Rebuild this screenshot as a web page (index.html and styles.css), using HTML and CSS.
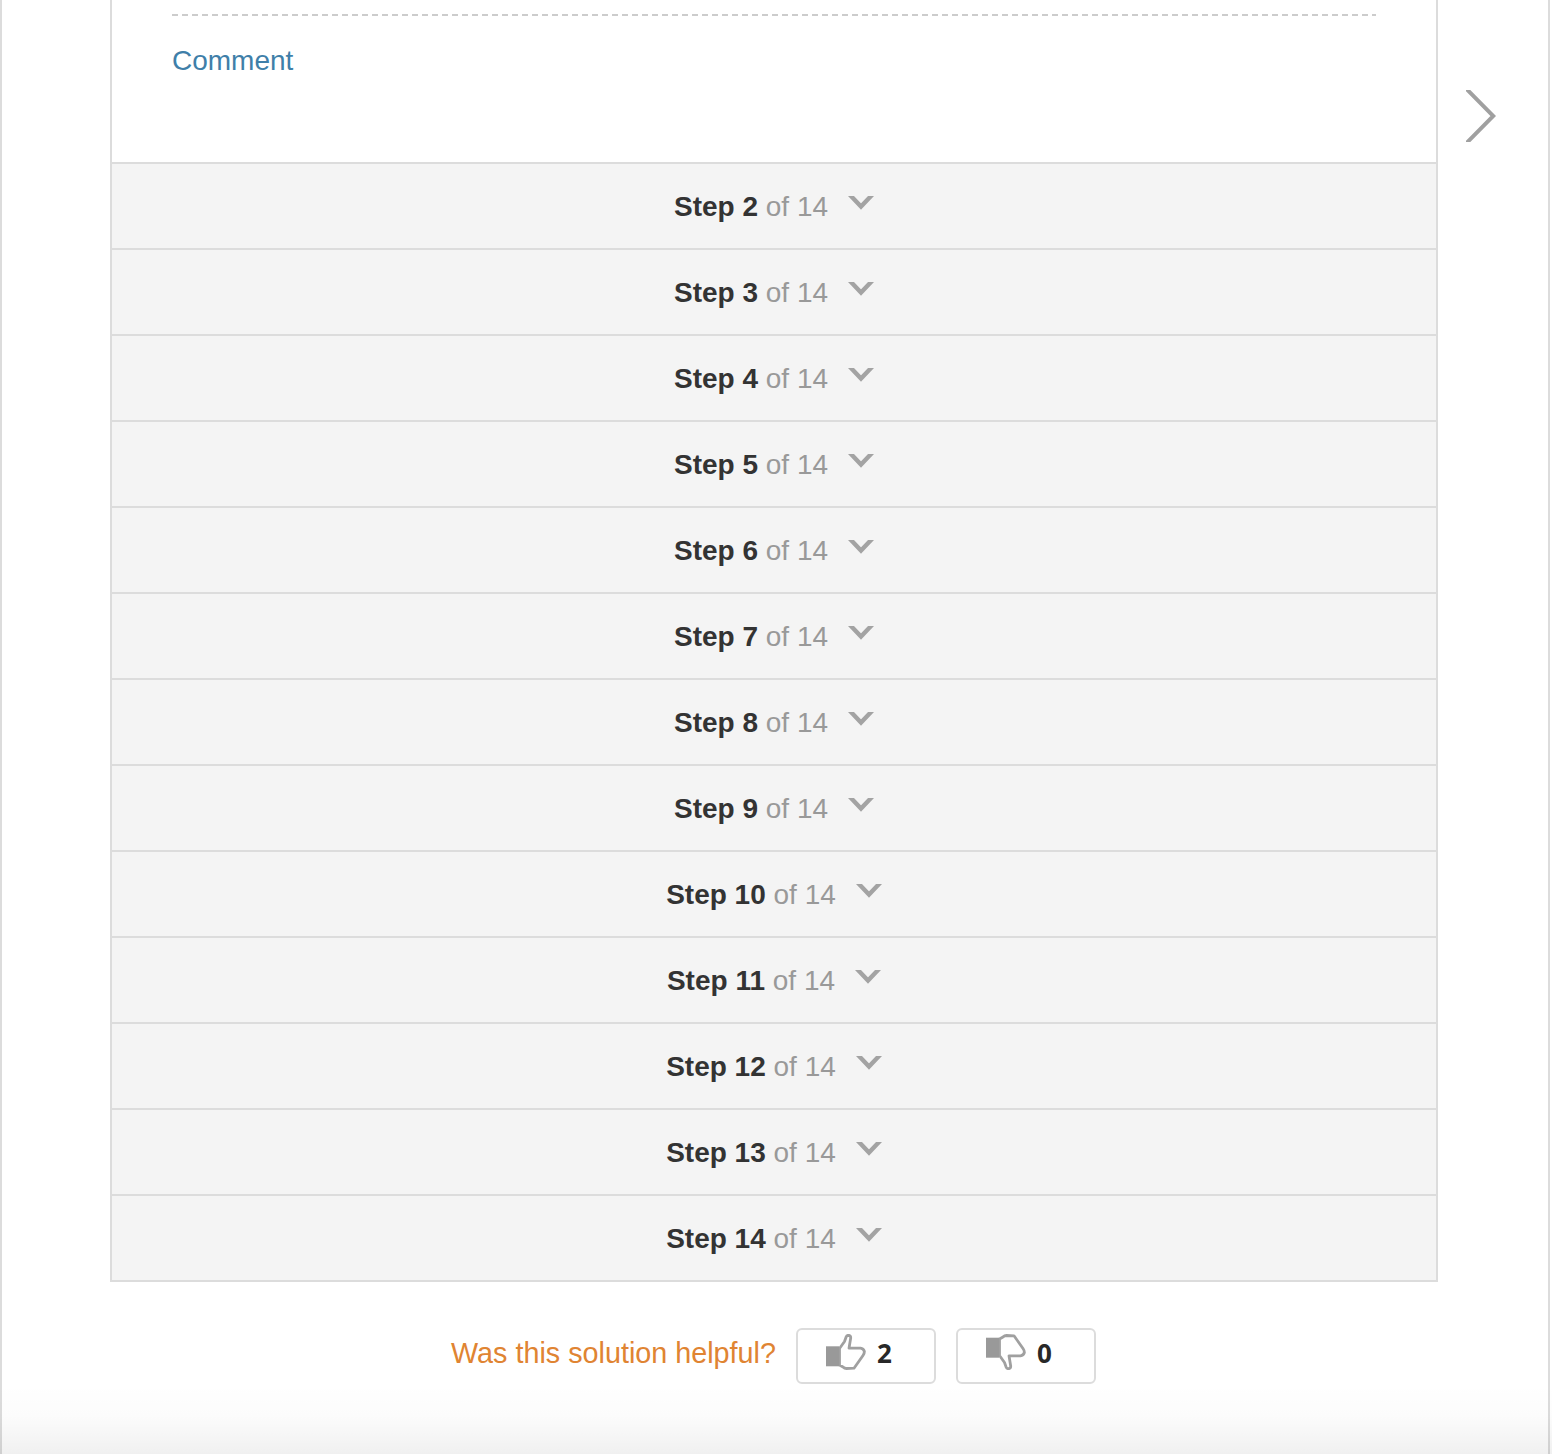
FILE: index.html
```
<!DOCTYPE html>
<html lang="en">
<head>
<meta charset="utf-8">
<title>Solution steps</title>
<link rel="stylesheet" href="styles.css">
</head>
<body>
<svg class="symbols" aria-hidden="true">
  <symbol id="chevron" viewBox="0 0 26 14"><path d="M1.5 -1.5L13 10.5L24.5 -1.5" fill="none" stroke="#a3a3a3" stroke-width="4.4"/></symbol>
  <symbol id="thumb" viewBox="0 0 40 36">
    <path d="M13.5 14.5L18.5 7.5L20.2 2.8Q20.8 1.3 22.5 1.3Q24.8 1.5 24.7 4L23 14.2H34.5Q37.5 14.6 38.4 17.5Q38.4 19.5 37 21.5L28 34.2L20.5 34.5Q18.5 34.5 17 33L13.5 31Z" fill="#fff" stroke="#a0a0a0" stroke-width="2.8" stroke-linejoin="round"/>
    <path d="M0 12.3H13V32.3H0Z" fill="#999"/>
  </symbol>
</svg>
<div class="page">
  <main class="content">
    <section class="panel">
      <div class="comments">
        <div class="divider"></div>
        <a class="comment-link">Comment</a>
      </div>
      <div class="step"><span><b>Step 2</b> of 14</span><svg class="chevron"><use href="#chevron"/></svg></div>
      <div class="step"><span><b>Step 3</b> of 14</span><svg class="chevron"><use href="#chevron"/></svg></div>
      <div class="step"><span><b>Step 4</b> of 14</span><svg class="chevron"><use href="#chevron"/></svg></div>
      <div class="step"><span><b>Step 5</b> of 14</span><svg class="chevron"><use href="#chevron"/></svg></div>
      <div class="step"><span><b>Step 6</b> of 14</span><svg class="chevron"><use href="#chevron"/></svg></div>
      <div class="step"><span><b>Step 7</b> of 14</span><svg class="chevron"><use href="#chevron"/></svg></div>
      <div class="step"><span><b>Step 8</b> of 14</span><svg class="chevron"><use href="#chevron"/></svg></div>
      <div class="step"><span><b>Step 9</b> of 14</span><svg class="chevron"><use href="#chevron"/></svg></div>
      <div class="step"><span><b>Step 10</b> of 14</span><svg class="chevron"><use href="#chevron"/></svg></div>
      <div class="step"><span><b>Step 11</b> of 14</span><svg class="chevron"><use href="#chevron"/></svg></div>
      <div class="step"><span><b>Step 12</b> of 14</span><svg class="chevron"><use href="#chevron"/></svg></div>
      <div class="step"><span><b>Step 13</b> of 14</span><svg class="chevron"><use href="#chevron"/></svg></div>
      <div class="step"><span><b>Step 14</b> of 14</span><svg class="chevron"><use href="#chevron"/></svg></div>
    </section>
    <div class="feedback">
      <span class="question">Was this solution helpful?</span>
      <button class="vote"><svg class="thumb"><use href="#thumb"/></svg><span>2</span></button>
      <button class="vote"><svg class="thumb thumb-down"><use href="#thumb"/></svg><span>0</span></button>
    </div>
  </main>
  <svg class="next" viewBox="0 0 30 52"><path d="M0.5 -1L27.3 26L0.5 53" fill="none" stroke="#a0a0a0" stroke-width="4"/></svg>
</div>
<div class="fade"></div>
</body>
</html>
```
FILE: styles.css
```
* { box-sizing: border-box; }
body {
  margin: 0;
  height: 1454px;
  overflow: hidden;
  background: #fff;
  font: 28px/36px "Liberation Sans", Arial, sans-serif;
}
.symbols { display: none; }
.page {
  display: flex;
  align-items: flex-start;
  width: 1550px;
  height: 1454px;
  padding-left: 108px;
  border: solid #dcdcdc;
  border-width: 0 2px;
}
.content { width: 1328px; }
.panel {
  border: 2px solid #dcdcdc;
  border-top: 0;
}
.comments {
  height: 162px;
  padding: 14px 60px 0;
}
.divider {
  height: 2px;
  background: repeating-linear-gradient(90deg, #ccc 0 6px, transparent 6px 10px);
}
.comment-link {
  display: block;
  margin-top: 27px;
  color: #3f7fa9;
}
.step {
  display: flex;
  justify-content: center;
  gap: 20px;
  height: 86px;
  padding-top: 25px;
  border-top: 2px solid #dcdcdc;
  background: #f4f4f4;
  color: #999;
}
.step b { color: #333; }
.chevron {
  width: 26px;
  height: 14px;
  margin-top: 7px;
}
.feedback {
  display: flex;
  gap: 20px;
  margin: 46px 0 0 341px;
}
.question {
  width: 325px;
  padding-top: 7px;
  font-size: 28.75px;
  white-space: nowrap;
  color: #e08432;
}
.vote {
  display: flex;
  align-items: flex-start;
  gap: 11px;
  width: 140px;
  height: 56px;
  padding: 4px 28px;
  border: 2px solid #dcdcdc;
  border-radius: 6px;
  background: #fff;
  color: #282828;
  font: bold 26px/38px "Open Sans", sans-serif;
}
.thumb {
  flex: none;
  width: 40px;
  height: 36px;
}
.thumb-down { transform: scaleY(-1); }
.next {
  width: 30px;
  height: 52px;
  margin: 90px 0 0 28px;
}
.fade {
  position: absolute;
  left: 0;
  top: 1384px;
  width: 1552px;
  height: 70px;
  background: linear-gradient(rgba(0,0,0,0), rgba(0,0,0,.012) 45%, rgba(0,0,0,.06));
}
```
